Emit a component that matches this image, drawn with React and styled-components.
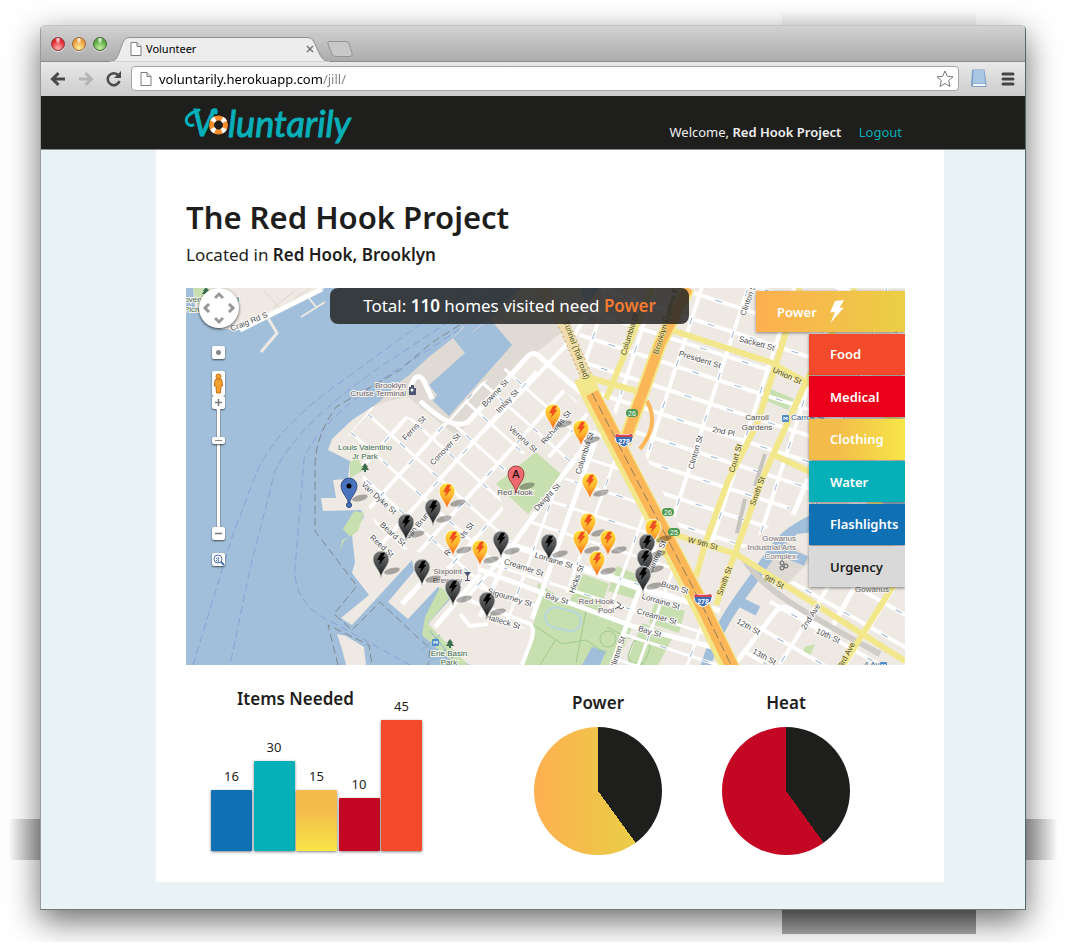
import React from "react";
import styled, { createGlobalStyle, css } from "styled-components";

const GlobalStyle = createGlobalStyle`
  * { box-sizing: border-box; }
  body {
    margin: 0;
    background: #fff;
    color: #1e1e1c;
    font-family: "Noto Sans", "Open Sans", sans-serif;
  }
  button { padding: 0; border: 0; background: none; font: inherit; color: inherit; cursor: pointer; }
  h1, h2, p { margin: 0; }
  b { font-weight: 600; }
`;

/* ---------- desktop and browser window ---------- */

const Desktop = styled.div`
  position: relative;
  overflow: hidden;
  padding: 25px 44px 32px 40px;
`;

const ShadowBand = styled.div`
  position: absolute;
  ${(p) =>
    p.$side === "top" &&
    css`top: 13px; height: 12px; right: 94px; width: 194px; background: linear-gradient(#f2f2f2, #cfcfcf);`}
  ${(p) =>
    p.$side === "bottom" &&
    css`bottom: 8px; height: 24px; right: 94px; width: 194px; background: linear-gradient(#4a4a4a, #969696);`}
  ${(p) =>
    p.$side === "left" &&
    css`left: 8px; width: 32px; bottom: 82px; height: 41px; background: linear-gradient(90deg, #fff, #808080);`}
  ${(p) =>
    p.$side === "right" &&
    css`right: 12px; width: 32px; bottom: 82px; height: 41px; background: linear-gradient(90deg, #808080, #fff);`}
`;

const WindowShadow = styled.div`
  border-radius: 5px 5px 0 0;
  box-shadow: 0 11px 32px rgba(0, 0, 0, 0.58);
`;

const Window = styled.div`
  position: relative;
  overflow: hidden;
  border: 1px solid #9a9a9a;
  border-top-color: #c4c4c4;
  border-right-color: #51686c;
  border-bottom-color: #777;
  border-radius: 5px 5px 0 0;
`;

const TitleBar = styled.div`
  display: flex;
  align-items: flex-end;
  height: 36px;
  padding-left: 10px;
  border-bottom: 1px solid #8b8b8b;
  background: linear-gradient(#d2d2d2, #acacac);
`;

const Lights = styled.div`
  display: flex;
  gap: 7px;
  align-self: center;
`;

const Light = styled.button`
  width: 14px;
  height: 14px;
  border: 1px solid ${(p) => p.$edge};
  border-radius: 50%;
  background: radial-gradient(ellipse at 50% 12%, #fff 0, transparent 32%),
    radial-gradient(circle at 50% 85%, ${(p) => p.$glow} 0, ${(p) => p.$tone} 65%);
  box-shadow: 0 1px 0 #e2e2e2;
`;

const Tab = styled.div`
  position: relative;
  display: flex;
  align-items: center;
  gap: 4px;
  width: 220px;
  height: 25px;
  margin: 0 0 -1px 3px;
  padding: 0 16px 2px 20px;
  font-size: 11px;
  color: #000;
  svg { position: relative; }
`;

const TabShape = styled.svg`
  && { position: absolute; }
  left: 0;
  top: 0;
`;

const TabTitle = styled.span`
  position: relative;
  flex: 1;
`;

const NewTab = styled.button`
  width: 26px;
  height: 16px;
  margin: 0 0 4px -3px;
  svg { display: block; }
`;

const Toolbar = styled.div`
  display: flex;
  align-items: center;
  height: 34px;
  padding: 0 8px 1px 8px;
  background: linear-gradient(#e9e9e9, #cccccc);
`;

const ToolButton = styled.button`
  display: grid;
  place-items: center;
  width: ${(p) => p.$w || 18}px;
  height: 20px;
`;

const Nav = styled.div`
  display: flex;
  gap: 10px;
`;

const AddressBar = styled.label`
  display: flex;
  align-items: center;
  flex: 1;
  gap: 7px;
  height: 25px;
  margin: 0 10px 0 8px;
  padding: 0 4px 0 8px;
  border: 1px solid #a5a5a5;
  border-radius: 4px;
  background: #fff;
`;

const AddressInput = styled.input`
  flex: 1;
  min-width: 0;
  padding: 0;
  border: 0;
  outline: 0;
  font: 13px/20px "Noto Sans", sans-serif;
  color: transparent;
  background: linear-gradient(90deg, #000 164px, #808080 164px);
  background-clip: text;
  -webkit-background-clip: text;
`;

const Extras = styled.div`
  display: flex;
  gap: 12px;
`;

/* ---------- site ---------- */

const SiteHeader = styled.header`
  display: flex;
  justify-content: space-between;
  align-items: flex-end;
  height: 54px;
  padding: 0 123px 0 143px;
  border-bottom: 1px solid #8a8a8a;
  background: #1e1e1c;
`;

const LogoLink = styled.a`
  svg { display: block; }
`;

const Account = styled.p`
  padding-bottom: 7px;
  font-size: 13px;
  line-height: 20px;
  color: #f0f0f0;
`;

const Logout = styled.a`
  margin-left: 14px;
  color: #07afb8;
  text-decoration: none;
`;

const Backdrop = styled.div`
  padding: 0 81px 27px 115px;
  background: #e9f2f4;
`;

const Panel = styled.main`
  padding: 43px 39px 27px 30px;
  background: #fff;
`;

const Title = styled.h1`
  font-size: 31px;
  line-height: 48px;
  font-weight: 600;
`;

const Place = styled.p`
  margin-bottom: 19px;
  font-size: 17px;
  line-height: 28px;
`;

/* ---------- map ---------- */

const MapFrame = styled.section`
  position: relative;
  overflow: hidden;
  height: 377px;
`;

const MapDrawing = styled.svg`
  display: block;
  width: 100%;
  height: 100%;
  font-family: "Liberation Sans", Arial, sans-serif;
`;

const Banner = styled.p`
  position: absolute;
  top: 0;
  left: 20%;
  width: 50%;
  border-radius: 8px;
  background: rgba(36, 36, 36, 0.85);
  color: #fff;
  font-size: 17px;
  line-height: 36px;
  text-align: center;
  white-space: nowrap;
  em { font-style: normal; font-weight: 600; color: #f47b30; }
`;

const Filters = styled.div`
  position: absolute;
  top: 3px;
  right: 0;
  display: flex;
  flex-direction: column;
  justify-content: space-between;
  align-items: flex-end;
  height: 296px;
`;

const Filter = styled.button`
  display: flex;
  align-items: center;
  gap: 12px;
  width: ${(p) => (p.$active ? 149 : 96)}px;
  height: 41px;
  padding-left: 21px;
  background: ${(p) => p.$fill};
  box-shadow: 0 1px 3px rgba(0, 0, 0, 0.45);
  color: ${(p) => p.$ink || "#fff"};
  font-size: 13px;
  line-height: 20px;
  font-weight: 600;
`;

const Controls = styled.div`
  position: absolute;
  top: 0;
  left: 12px;
  display: flex;
  flex-direction: column;
  align-items: center;
  width: 41px;
`;

const PanPad = styled.div`
  display: grid;
  grid-template: repeat(3, 12px) / repeat(3, 12px);
  place-content: center;
  width: 40px;
  height: 40px;
  margin-bottom: 18px;
  border-radius: 50%;
  background: #fff;
  box-shadow: 0 1px 3px rgba(0, 0, 0, 0.7);
`;

const PanArrow = styled.button`
  display: grid;
  place-items: center;
  grid-area: ${(p) => p.$area};
`;

const MapButton = styled.button`
  display: grid;
  place-items: center;
  width: 13px;
  height: ${(p) => p.$h || 13}px;
  margin-bottom: ${(p) => p.$after || 0}px;
  border-radius: 2px;
  background: #fff;
  box-shadow: 0 1px 2px rgba(0, 0, 0, 0.6);
`;

const ZoomRange = styled.input`
  appearance: none;
  writing-mode: vertical-lr;
  width: 13px;
  height: 118px;
  margin: 0;
  background: linear-gradient(90deg, transparent 4px, #8d9aa5 4px 5px, #fff 5px 8px, #8d9aa5 8px 9px, transparent 9px);
  &::-webkit-slider-thumb {
    appearance: none;
    width: 13px;
    height: 7px;
    border-radius: 2px;
    background: linear-gradient(#888, #888) center / 7px 1px no-repeat #fff;
    box-shadow: 0 1px 2px rgba(0, 0, 0, 0.6);
  }
`;

/* ---------- charts ---------- */

const Charts = styled.section`
  display: flex;
  align-items: flex-start;
  padding: 22px 0 0 25px;
`;

const ChartTitle = styled.h2`
  font-size: 17px;
  line-height: 24px;
  font-weight: 600;
`;

const BarChart = styled.div`
  display: grid;
  flex: 0 0 211px;
  margin-right: 112px;
  > * { grid-area: 1 / 1; }
  ${ChartTitle} { padding-left: 26px; }
`;

const Bars = styled.div`
  display: flex;
  align-items: flex-end;
  justify-content: space-between;
  padding-top: 10px;
`;

const BarColumn = styled.div`
  display: flex;
  flex-direction: column;
  gap: 5px;
  width: 41px;
  font-size: 13px;
  line-height: 18px;
  text-align: center;
`;

const Bar = styled.div`
  border-radius: 1px;
  background: ${(p) => p.$fill};
  box-shadow: 0 1px 3px rgba(0, 0, 0, 0.5);
`;

const Pies = styled.div`
  display: flex;
  gap: 60px;
  margin-top: 4px;
`;

const PieCard = styled.div`
  display: flex;
  flex-direction: column;
  align-items: center;
  gap: 12px;
`;

const Pie = styled.div`
  width: 128px;
  height: 128px;
  border-radius: 50%;
  background: conic-gradient(#1e1e1c 0 144deg, transparent 144deg), ${(p) => p.$fill};
`;

/* ---------- data ---------- */

const filters = [
  { name: "Power", fill: "linear-gradient(90deg, #fdb050, #f2c14a 60%, #ebcf45)", active: true },
  { name: "Food", fill: "#f34a2b" },
  { name: "Medical", fill: "#eb001b" },
  { name: "Clothing", fill: "linear-gradient(90deg, #f3bc4b 30%, #f8e748)" },
  { name: "Water", fill: "#07afb8" },
  { name: "Flashlights", fill: "#0f70b4" },
  { name: "Urgency", fill: "#d9d9d9", ink: "#1e1e1c" },
];

const items = [
  { count: 16, height: 61, fill: "#0f70b4" },
  { count: 30, height: 90, fill: "#07afb8" },
  { count: 15, height: 61, fill: "linear-gradient(#f3bc4b 35%, #f8e748)" },
  { count: 10, height: 53, fill: "#c40824" },
  { count: 45, height: 131, fill: "#f34a2b" },
];

const pies = [
  { name: "Power", fill: "linear-gradient(90deg, #fdb050, #f2c14a 45%, #e6d545)" },
  { name: "Heat", fill: "#c40824" },
];

/* text, x, y, angle, kind */
const labels = [
  ["Craig Rd S", 250, 325, -22],
  ["Ferris St", 416, 431, -47],
  ["Conover St", 447, 452, -47],
  ["Bowne St", 497, 396, -47],
  ["Imlay St", 509, 404, -47],
  ["Verona St", 521, 442, 42],
  ["Richards St", 558, 430, -50],
  ["Columbia St", 587, 455, -72],
  ["Columbia St", 632, 336, -73, "main"],
  ["Tunnel (Toll road)", 574, 352, 70, "main"],
  ["Brooklyn Queens Expy", 670, 317, -73, "main"],
  ["Clinton St", 751, 301, -70],
  ["Sackett St", 756, 347, 15],
  ["President St", 699, 363, 17],
  ["Union St", 786, 379, 24, "main"],
  ["2nd Pl", 723, 435, 12],
  ["Court St", 738, 460, -74, "main"],
  ["Clinton St", 698, 454, -74],
  ["Smith St", 760, 493, -70, "main"],
  ["Smith St", 727, 583, -70, "main"],
  ["W 9th St", 702, 547, 15, "main"],
  ["9th St", 773, 585, 27, "main"],
  ["2nd Ave", 813, 619, -58],
  ["10th St", 827, 639, 25],
  ["12th St", 747, 630, 29],
  ["13th St", 763, 660, 29],
  ["3rd Ave", 849, 657, -62, "main"],
  ["Van Dyke St", 377, 501, 42],
  ["Beard St", 391, 537, 42],
  ["Reed St", 380, 549, 42],
  ["Van Brunt St", 423, 524, -50],
  ["Richards St", 461, 542, -50],
  ["Dwight St", 549, 500, -47],
  ["Creamer St", 523, 571, 18],
  ["Lorraine St", 553, 564, 17],
  ["Sigourney St", 509, 601, 17],
  ["Halleck St", 502, 625, 17],
  ["Bay St", 556, 602, 17],
  ["Hicks St", 579, 581, -70],
  ["Bush St", 674, 591, 16],
  ["Lorraine St", 660, 605, 16],
  ["Creamer St", 656, 620, 16],
  ["Bay St", 649, 635, 16],
  ["Clinton St", 659, 559, -65],
  ["Clinton St", 620, 655, -72],
];

/* text, x, y, anchor, colour */
const places = [
  ["Governors Island", 239, 303, "end", "#3c6e50"],
  ["Picnic Area", 184, 313, "start", "#3c6e50"],
  ["Brooklyn", 406, 389, "end", "#67626b"],
  ["Cruise Terminal", 406, 397, "end", "#67626b"],
  ["Louis Valentino", 365, 451, "middle", "#3c6e50"],
  ["Jr Park", 365, 460, "middle", "#3c6e50"],
  ["Red Hook", 515, 496, "middle", "#555"],
  ["Sixpoint", 462, 575, "end", "#67626b"],
  ["Brewery", 462, 584, "end", "#67626b"],
  ["Red Hook", 614, 605, "end", "#67626b"],
  ["Pool", 614, 614, "end", "#67626b"],
  ["Carroll", 757, 421, "middle", "#555"],
  ["Gardens", 757, 431, "middle", "#555"],
  ["Carroll St", 791, 421, "start", "#2f6290"],
  ["Gowanus", 796, 542, "end", "#77727b"],
  ["Industrial Arts", 796, 551, "end", "#77727b"],
  ["Complex", 796, 560, "end", "#77727b"],
  ["Gowanus", 872, 593, "middle", "#666"],
  ["Erie Basin", 449, 657, "middle", "#3c6e50"],
  ["Park", 449, 666, "middle", "#3c6e50"],
  ["4 Av", 864, 668, "start", "#2f6290"],
];

const pins = [
  [553, 413, "need"], [581, 429, "need"], [590, 482, "need"], [447, 492, "need"],
  [433, 508, "done"], [406, 523, "done"], [588, 522, "need"], [653, 528, "need"],
  [453, 539, "need"], [581, 539, "need"], [608, 539, "need"], [501, 540, "done"],
  [647, 543, "done"], [549, 543, "done"], [480, 549, "need"], [645, 558, "done"],
  [381, 560, "done"], [597, 560, "need"], [422, 568, "done"], [643, 575, "done"],
  [453, 588, "done"], [487, 601, "done"],
];

/* ---------- drawings ---------- */

const PageIcon = ({ h = 14 }) => (
  <svg width="12" height={h} viewBox="0 0 12 14" fill="#fff" stroke="#7c7c7c">
    <path d="M1 .5h6l4 4v9H1z" />
    <path d="M7 .5v4h4" fill="#e4e4e4" />
  </svg>
);

const Arrow = ({ flip, color }) => (
  <svg width="16" height="14" viewBox="0 0 16 14" fill="none" stroke={color} strokeWidth="3">
    <path d={flip ? "M1 7h12M7.500 1.200l6 5.800-6 5.800" : "M15 7H3M8.500 1.200L2.500 7l6 5.800"} />
  </svg>
);

const Bolt = (props) => (
  <svg width="16" height="24" viewBox="0 0 16 24" {...props}>
    <path d="M6 1L15 0l-4.500 8 4.500-.5L1.500 23l4.500-11L1 12.500z" fill="#fff" />
  </svg>
);

function Logo() {
  return (
    <svg width="172" height="45" viewBox="0 0 172 45" role="img" aria-label="Voluntarily">
      <g fill="#07afb8" stroke="#07afb8" strokeWidth="1" fontFamily="Lato, sans-serif" fontStyle="italic" fontSize="36">
        <text x="8" y="32">V</text>
        <text x="44" y="33">luntarily</text>
      </g>
      <g fill="none" stroke="#07afb8" strokeWidth="3" strokeLinecap="round">
        <path d="M9 21C4 23 0 17 4 12 8 8 12 7 15 6" />
        <path d="M28 7c3-2 5-1 4 2" />
      </g>
      <circle cx="34.500" cy="21" r="10" fill="#1e1e1c" />
      <circle cx="34.500" cy="21" r="7" fill="none" stroke="#f78d2d" strokeWidth="5" />
      <circle cx="34.500" cy="21" r="7" fill="none" stroke="#fff" strokeWidth="5"
        strokeDasharray="4 7" strokeDashoffset="-3.500" />
    </svg>
  );
}

/* A family of parallel streets through a point, at one angle. */
function Streets({ clip, x, y, angle, step, from, to, width = 4 }) {
  const lines = [];
  for (let i = from; i <= to; i++) lines.push(i * step);
  return (
    <g clipPath={`url(#${clip})`}>
      <g transform={`translate(${x} ${y}) rotate(${angle})`}>
        {lines.map((d) => (
          <g key={d}>
            <path d={`M-450 ${d}H450`} stroke="#fff" strokeWidth={width} />
            <path d={`M-450 ${d}H450`} stroke="#9fb8d2" strokeWidth="1" strokeDasharray="7 37" />
          </g>
        ))}
      </g>
    </g>
  );
}

function Pin({ x, y, kind }) {
  const fill = { need: "url(#pinNeed)", done: "url(#pinDone)", a: "#ee6a6e", b: "#4a73bd" }[kind];
  const line = { need: "#fff", done: "#d8d8d8", a: "#8c2f33", b: "#243f7c" }[kind];
  return (
    <g transform={`translate(${x} ${y})`}>
      <ellipse cx="11" cy="12" rx="8" ry="3" fill="#000" opacity=".3" transform="rotate(-14 11 12)" />
      <path d="M0 19C-1 11-8 7-8 0a8 8 0 0 1 16 0C8 7 1 11 0 19z" fill={fill} stroke={line} strokeWidth=".8" />
      {(kind === "need" || kind === "done") && (
        <path d="M0-6l4-.5-2 4.500 2.500-.2L-2 6l1-5-3 .2z" fill={kind === "need" ? "#f0501e" : "#000"} />
      )}
      {kind === "a" && <text y="4" fontSize="11" textAnchor="middle" fill="#000">A</text>}
      {kind === "b" && <><circle r="2.500" /><circle cy="19" r="2.500" fill="#4a73bd" stroke="#243f7c" /></>}
    </g>
  );
}

const Shield = ({ x, y }) => (
  <g transform={`translate(${x} ${y})`}>
    <path d="M-8-6q8 2 16 0 4 8-8 13-12-5-8-13z" fill="#3a6fb7" stroke="#fff" />
    <path d="M-8-6q8 2 16 0l1 3H-9z" fill="#d8444a" />
    <text y="4" fontSize="7" fontWeight="700" textAnchor="middle" fill="#fff">278</text>
  </g>
);

const Exit = ({ x, y, n }) => (
  <g transform={`translate(${x} ${y})`}>
    <rect x="-6" y="-4" width="12" height="8" rx="4" fill="#4d9a52" />
    <text y="3" fontSize="7" textAnchor="middle" fill="#fff">{n}</text>
  </g>
);

const Tree = ({ x, y }) => (
  <path transform={`translate(${x} ${y})`} d="M0-4l3 4H2l2 3H1v2h-2V3h-3l2-3h-1z" fill="#3c6e50" />
);

function NeighbourhoodMap() {
  return (
    <MapDrawing viewBox="186 289 719 377" preserveAspectRatio="xMidYMid slice" role="img" aria-label="Map of Red Hook">
      <defs>
        <linearGradient id="pinNeed" x2="0" y2="1">
          <stop offset="0" stopColor="#ffe03a" /><stop offset=".5" stopColor="#ffb52e" /><stop offset="1" stopColor="#f4581f" />
        </linearGradient>
        <linearGradient id="pinDone" x2="0" y2="1">
          <stop offset="0" stopColor="#77797b" /><stop offset=".6" stopColor="#3d3f41" /><stop offset="1" stopColor="#111" />
        </linearGradient>
        <clipPath id="west">
          <path d="M372 408L340 446 356 462 366 470 358 490 370 510 380 540 376 556 408 550 428 556 448 580 478 608 512 545 495 480 535 445 565 474 600 430 575 400 520 360 480 385 446 424 415 420z" />
        </clipPath>
        <clipPath id="south">
          <path d="M478 560L530 522 570 474 592 425 622 455 668 540 737 666H612L632 618 545 585 524 630 480 612z" />
        </clipPath>
        <clipPath id="east">
          <path d="M600 289H905V560L842 520 800 500 740 553 684 538 640 445 590 384 575 345z" />
        </clipPath>
        <clipPath id="gowanus"><path d="M735 665L780 585 905 560V666z" /></clipPath>
      </defs>

      <rect x="186" y="289" width="719" height="377" fill="#a1bfda" />
      <path fill="#eee9e2" d="M193 289H325L270 318 240 331 222 330 203 320 195 308z" />
      <path fill="#c8dfb0" d="M193 289h16v16h-12z" />
      <g fill="none" stroke="#eee9e2" strokeWidth="3">
        <path d="M268 319l9 15-16 19" />
        <path d="M309 299l7 9M301 318l24-15" strokeWidth="2" />
        <path stroke="#ddd6cc" strokeWidth="1" d="M263 291l17 18M295 292l-22 17M310 289l-15 10" />
      </g>
      <path fill="#dfdad3" d="M580 289H520L500 312 472 333 466 324 453 339 430 357 408 377 397 385 380 402 365 413 430 470 540 440 620 400z" />
      <path fill="#a1bfda" d="M465 354L453 339 467 325 473 333 490 320 512 346 449 417 433 402 437 396 429 386z" />
      <path fill="#eee9e2" d="M905 289H600L566 330 528 360 470 424 456 436 440 424 408 398 388 402 372 408 352 421 332 440 328 451 350 462 348 480 333 481 336 499 321 499 323 512 361 511 364 518 352 535 353 546 355 563 352 574 369 596 341 619 352 626 412 561 414 572 388 603 408 620 438 588 452 598 428 625 424 638 470 666H905z" />
      <path fill="#eee9e2" d="M337 635l9 2 18 11 2 18h-20l-4-16z" />

      {/* parks and the canal */}
      <g fill="#c8dfb0">
        <path d="M536 453l27 24-35 38-32-30z" />
        <path d="M350 463l8-4 6 12-14 8zM354 512l10 2-6 18-14 10-4 9 2-10 8-3-7-8z" />
        <path d="M538 584l30 20 64 24-15 38h-93l10-42z" />
        <path d="M583 575l26 10-10 28-30-10zM617 567l28 12-7 22-30-9z" />
        <path d="M642 624l32 12-16 30h-32zM655 602l30 10-6 22-30-10z" />
        <path d="M440 588l12 8-24 29 40 41h-12l-34-30 3-18z" />
        <path d="M766 388l28 12-6 11-28-12zM805 648l10-3-5 12-8-2zM572 356l14 2 4 15-8 2z" />
      </g>
      <path fill="#dfdad3" d="M760 570l22-30 30 20-24 24z" />
      <path fill="none" stroke="#a1bfda" strokeWidth="10" d="M704 672C716 632 730 612 752 582S776 540 806 524 860 520 905 500M742 604l16 8M776 550l30 12M796 530l18 -2" />
      <path fill="#a1bfda" d="M592 648l14 4-6 14h-18z" />
      <g fill="none" stroke="#9fc98d">
        <rect x="545" y="610" width="36" height="20" rx="10" transform="rotate(14 562 620)" stroke="#b7d7df" strokeWidth="2" />
        <path d="M532 625l30 20 24-4 20 14M586 612l-10 52M607 628l24 12M556 640l-16 26" />
        <rect x="630" y="640" width="18" height="26" rx="8" transform="rotate(22 640 653)" />
        <circle cx="608" cy="640" r="8" />
      </g>

      {/* street grids */}
      <Streets clip="west" x={440} y={480} angle={42} step={25} from={-10} to={10} width={3} />
      <Streets clip="west" x={440} y={480} angle={-48} step={33} from={-8} to={8} width={4} />
      <Streets clip="south" x={560} y={560} angle={18} step={26} from={-8} to={8} width={3} />
      <Streets clip="south" x={579} y={560} angle={-70} step={46} from={-5} to={5} width={3} />
      <Streets clip="east" x={660} y={362} angle={18} step={25} from={-12} to={12} width={4} />
      <Streets clip="east" x={694} y={455} angle={-72} step={44} from={-5} to={7} width={4} />
      <Streets clip="gowanus" x={800} y={620} angle={30} step={28} from={-6} to={6} />
      <Streets clip="gowanus" x={810} y={617} angle={-58} step={56} from={-4} to={4} />

      <g fill="none" stroke="#fff" strokeWidth="5" strokeLinejoin="round">
        <path d="M420 402C440 420 455 430 468 423L528 357Q534 352 540 358L600 410" />
        <path d="M410 390Q416 370 424 382L432 400M240 331L322 290" />
        <path d="M482 434L572 340 590 310" strokeWidth="4" />
        <path d="M480 618L510 550 560 480 596 432M500 543L640 590 720 612M478 570L632 627 720 650" />
        <path d="M532 620L596 440M612 666L665 520M435 628L480 575M402 605L425 580" />
        <path d="M466 600L530 625Q536 630 530 645L522 666M460 615l10 12 18-2" strokeWidth="4" />
        <path d="M735 665L776 612Q782 606 790 610L830 632 870 560M793 516L808 480" />
      </g>
      <g fill="none" stroke="#c7c4bf" strokeWidth="4">
        <path d="M765 455l-10 32M745 500l-8 34" />
        <path d="M744 560C760 588 800 612 880 655" stroke="#d0cdc8" strokeWidth="6" />
      </g>

      {/* ferry lines and borders */}
      <g fill="none" strokeDasharray="8 4">
        <g stroke="#8c9fd8">
          <path d="M470 289L345 380Q280 425 258 470L233 535 193 666" />
          <path d="M500 289L380 368Q298 425 275 472L250 570 230 666" />
          <path d="M520 289L430 350Q320 415 304 460L295 570Q294 605 330 622L410 666" />
        </g>
        <g stroke="#7f868c">
          <path d="M500 300L430 345 400 371 336 408Q314 440 315 470V532L357 587 334 615 352 631 380 603 430 650 428 666" />
          <path d="M338 666L328 626 369 646 372 666" />
        </g>
      </g>
      <g fill="none" stroke="#8fb0cf">
        <path d="M422 640l24 26M430 632l28 34M420 652l20-16M428 664l18-14" />
      </g>

      {/* main roads */}
      <g fill="none" stroke="#f3e78c" strokeWidth="6" strokeLinejoin="round">
        <path d="M652 289L606 400M580 376L640 393M662 328L770 363 815 388 905 424" />
        <path d="M800 289L757 425 728 482 705 545 696 578" />
        <path d="M855 289L805 385 763 478 716 606M772 455L905 518" />
        <path d="M676 536L736 555 905 662M905 568L842 668" />
      </g>
      <path d="M541 289L566 330 590 386" fill="none" stroke="#eedbb0" strokeWidth="11" />
      <path d="M536 289L560 330 584 386M546 289L572 330 596 386" fill="none" stroke="#d6a35c" strokeDasharray="2 3" />
      <g fill="none" strokeLinejoin="round">
        <path d="M583 378L594 402 625 462 700 606 732 672" stroke="#f3e78c" strokeWidth="19" />
        <path d="M688 289L660 345 624 445" stroke="#f3e78c" strokeWidth="14" />
        <path d="M592 394L625 458 702 606 734 672" stroke="#fbb757" strokeWidth="13" />
        <path d="M688 289L660 345 624 445" stroke="#fbb757" strokeWidth="10" />
        <path d="M647 402Q660 425 640 450" stroke="#fbb757" strokeWidth="4" />
        <path d="M592 394L625 458 702 606 734 672" stroke="#8f7d5c" strokeDasharray="10 4" />
      </g>

      <g fontSize="8" textAnchor="middle" paintOrder="stroke" strokeLinejoin="round">
        {labels.map(([text, x, y, angle, kind]) => (
          <text key={text + x} transform={`translate(${x} ${y}) rotate(${angle})`} fill={kind ? "#4c4722" : "#494949"}
            stroke={kind ? "#f7efab" : "#fff"} strokeWidth={kind ? 1 : 2}>
            {text}
          </text>
        ))}
      </g>
      <g fontSize="8" paintOrder="stroke" stroke="#f6f3ee" strokeWidth="2">
        {places.map(([text, x, y, anchor, color]) => (
          <text key={text + x + y} x={x} y={y} textAnchor={anchor} fill={color}>{text}</text>
        ))}
      </g>

      <Tree x={365} y={468} />
      <Tree x={450} y={644} />
      <Tree x={206} y={292} />
      <g fill="#4b5573">
        <path d="M409 388h2v-2h3v3h2v7h-7z" />
        <path d="M464 573h7l-3 4v4h2v1h-5v-1h2v-4z" />
      </g>
      <circle cx="412" cy="391" r="1.500" fill="#fff" />
      <g fill="none" stroke="#55585c">
        <path d="M617 603l4 3-4 3M615 610l3-2 3 2 3-2" />
        <circle cx="782" cy="564" r="2" /><circle cx="786" cy="567" r="2" /><circle cx="782" cy="569" r="2" />
      </g>
      {[[785, 419], [435, 643], [883, 666]].map(([x, y]) => (
        <g key={x}><rect x={x - 3} y={y - 3} width="7" height="7" rx="1" fill="#4d8ec6" /><path d={`M${x - 1} ${y + 2}v-3l2 2 1-2v3`} stroke="#fff" fill="none" /></g>
      ))}

      <Exit x={632} y={414} n="26" />
      <Exit x={668} y={513} n="26" />
      <Exit x={674} y={533} n="25" />
      <Shield x={624} y={441} />
      <Shield x={703} y={601} />

      <Pin x={516} y={475} kind="a" />
      <Pin x={349} y={487} kind="b" />
      {pins.map(([x, y, kind]) => <Pin key={`${x}-${y}`} x={x} y={y} kind={kind} />)}
    </MapDrawing>
  );
}

const Chevron = ({ turn }) => (
  <svg width="10" height="10" viewBox="-5 -5 10 10" fill="none" stroke="#999" strokeWidth="3">
    <path d="M-4 2L0-2 4 2" transform={`rotate(${turn})`} />
  </svg>
);

function MapControls() {
  return (
    <Controls>
      <PanPad>
        <PanArrow $area="1 / 2" aria-label="Pan up"><Chevron turn={0} /></PanArrow>
        <PanArrow $area="2 / 1" aria-label="Pan left"><Chevron turn={-90} /></PanArrow>
        <PanArrow $area="2 / 3" aria-label="Pan right"><Chevron turn={90} /></PanArrow>
        <PanArrow $area="3 / 2" aria-label="Pan down"><Chevron turn={180} /></PanArrow>
      </PanPad>
      <MapButton $after={12} aria-label="My location">
        <svg width="7" height="7"><circle cx="3.500" cy="3.500" r="2.500" fill="#888" /></svg>
      </MapButton>
      <MapButton $h={25} aria-label="Street view">
        <svg width="11" height="21" viewBox="0 0 11 21" fill="#f4a22c" stroke="#c4701a">
          <path d="M3 6Q1.500 7 1.500 13H3l.5 7h4l.5-7h1.500q0-6-1.500-7z" />
          <circle cx="5.500" cy="3.500" r="2.500" />
        </svg>
      </MapButton>
      <MapButton aria-label="Zoom in">
        <svg width="7" height="7"><path d="M0 3.500h7M3.500 0v7" stroke="#777" strokeWidth="1.500" /></svg>
      </MapButton>
      <ZoomRange type="range" aria-label="Zoom level" min="0" max="100" defaultValue="25" />
      <MapButton $after={13} aria-label="Zoom out">
        <svg width="7" height="7"><path d="M0 3.500h7" stroke="#777" strokeWidth="1.500" /></svg>
      </MapButton>
      <MapButton aria-label="Zoom to area">
        <svg width="12" height="12" viewBox="0 0 12 12" fill="none" stroke="#4a70b8">
          <circle cx="5" cy="5" r="4" /><path d="M8 8l3 3" strokeWidth="2" /><path d="M3 4.500h4M3 6.500h4M5 3v5" strokeDasharray="1 1" />
        </svg>
      </MapButton>
    </Controls>
  );
}

/* ---------- page ---------- */

export default function App() {
  return (
    <>
      <GlobalStyle />
      <Desktop>
        <WindowShadow>
          <ShadowBand $side="top" />
          <ShadowBand $side="bottom" />
          <ShadowBand $side="left" />
          <ShadowBand $side="right" />
          <Window>
            <TitleBar>
              <Lights>
                <Light aria-label="Close" $tone="#e0242f" $glow="#ffb3b3" $edge="#8d3a3c" />
                <Light aria-label="Minimise" $tone="#eb9c3d" $glow="#ffee9c" $edge="#9a6434" />
                <Light aria-label="Zoom" $tone="#5aa844" $glow="#c5f0a0" $edge="#41682f" />
              </Lights>
              <Tab>
                <TabShape width="220" height="25" viewBox="0 0 220 25">
                  <path d="M0 24.500C6 24 7 21 9 16L13 5Q15 .5 20 .5H197Q202 .5 204 5L210 18Q213 24 219 24.500V25H0z" fill="#ededed" stroke="#909090" />
                  <path d="M0 25H220" stroke="#e9e9e9" />
                </TabShape>
                <PageIcon />
                <TabTitle>Volunteer</TabTitle>
                <ToolButton $w={8} aria-label="Close tab">
                  <svg width="8" height="8"><path d="M1 1l6 6M7 1L1 7" stroke="#777" strokeWidth="1.500" /></svg>
                </ToolButton>
              </Tab>
              <NewTab aria-label="New tab">
                <svg width="26" height="16" viewBox="0 0 26 16">
                  <path d="M2 .5H19Q21 .5 22 3L25 12Q26 15.500 23 15.500H9Q6 15.500 5 13L1 3Q0 .5 2 .5z" fill="#c8c8c8" stroke="#939393" />
                </svg>
              </NewTab>
            </TitleBar>
            <Toolbar>
              <Nav>
                <ToolButton aria-label="Back"><Arrow color="#4a4a4a" /></ToolButton>
                <ToolButton aria-label="Forward"><Arrow flip color="#b5b5b5" /></ToolButton>
                <ToolButton aria-label="Reload">
                  <svg width="16" height="16" viewBox="0 0 16 16">
                    <path d="M12.500 4.500A6 6 0 1 0 13.500 10" fill="none" stroke="#4a4a4a" strokeWidth="2.500" />
                    <path d="M15 0v7H8z" fill="#4a4a4a" />
                  </svg>
                </ToolButton>
              </Nav>
              <AddressBar>
                <PageIcon h={16} />
                <AddressInput aria-label="Address" defaultValue="voluntarily.herokuapp.com/jill/" />
                <ToolButton aria-label="Bookmark">
                  <svg width="18" height="18" viewBox="0 0 18 18" fill="#fff" stroke="#777" strokeLinejoin="round">
                    <path d="M9 1l2.300 5.300 5.700.5-4.300 3.800 1.300 5.900L9 13.400 4 16.500l1.300-5.900L1 6.800l5.700-.5z" />
                  </svg>
                </ToolButton>
              </AddressBar>
              <Extras>
                <ToolButton aria-label="Reading list">
                  <svg width="17" height="19" viewBox="0 0 17 19">
                    <path d="M2 1.500Q2 .5 3 .5H14.500L16.500 15v3H3Q1 18 1 16z" fill="#7f9fc4" />
                    <path d="M3.500 1H14l1 13.500H3z" fill="#a9c7e2" />
                    <path d="M3 15h12.500v2H3z" fill="#f4f7fa" />
                  </svg>
                </ToolButton>
                <ToolButton aria-label="Menu">
                  <svg width="14" height="14" stroke="#444" strokeWidth="3" strokeLinecap="round"><path d="M2 2h10M2 7h10M2 12h10" /></svg>
                </ToolButton>
              </Extras>
            </Toolbar>

            <SiteHeader>
              <LogoLink href="#home"><Logo /></LogoLink>
              <Account>
                Welcome, <b>Red Hook Project</b> <Logout href="#logout">Logout</Logout>
              </Account>
            </SiteHeader>

            <Backdrop>
              <Panel>
                <Title>The Red Hook Project</Title>
                <Place>Located in <b>Red Hook, Brooklyn</b></Place>

                <MapFrame>
                  <NeighbourhoodMap />
                  <MapControls />
                  <Banner>Total: <b>110</b> homes visited need <em>Power</em></Banner>
                  <Filters>
                    {filters.map((f) => (
                      <Filter key={f.name} $fill={f.fill} $ink={f.ink} $active={f.active} aria-pressed={!!f.active}>
                        {f.name}
                        {f.active && <Bolt />}
                      </Filter>
                    ))}
                  </Filters>
                </MapFrame>

                <Charts>
                  <BarChart>
                    <ChartTitle>Items Needed</ChartTitle>
                    <Bars>
                      {items.map((item) => (
                        <BarColumn key={item.count}>
                          {item.count}
                          <Bar $fill={item.fill} style={{ height: item.height }} />
                        </BarColumn>
                      ))}
                    </Bars>
                  </BarChart>
                  <Pies>
                    {pies.map((pie) => (
                      <PieCard key={pie.name}>
                        <ChartTitle>{pie.name}</ChartTitle>
                        <Pie $fill={pie.fill} role="img" aria-label={`${pie.name}: 60%`} />
                      </PieCard>
                    ))}
                  </Pies>
                </Charts>
              </Panel>
            </Backdrop>
          </Window>
        </WindowShadow>
      </Desktop>
    </>
  );
}
